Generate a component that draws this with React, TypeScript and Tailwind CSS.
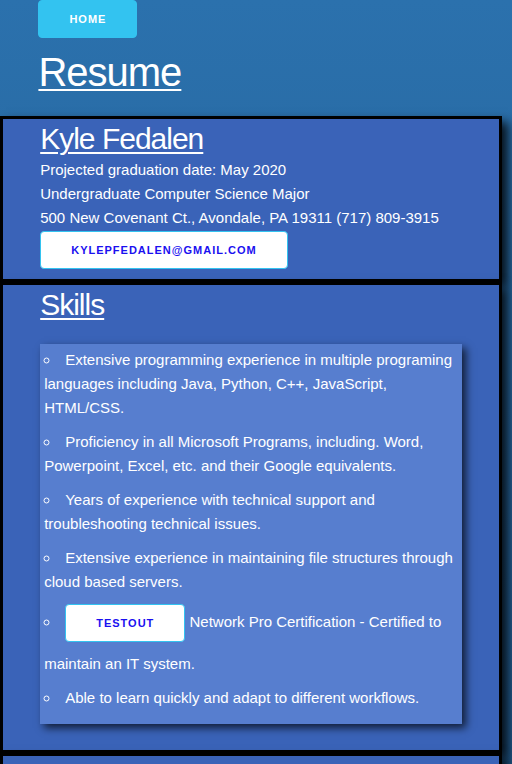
import React from "react";

const skills = [
  "Extensive programming experience in multiple programing languages including Java, Python, C++, JavaScript, HTML/CSS.",
  "Proficiency in all Microsoft Programs, including. Word, Powerpoint, Excel, etc. and their Google equivalents.",
  "Years of experience with technical support and troubleshooting technical issues.",
  "Extensive experience in maintaining file structures through cloud based servers.",
];

function Button({ children, primary }: { children: React.ReactNode; primary?: boolean }) {
  return (
    <a
      href="#"
      className={
        primary
          ? "inline-block h-[38px] rounded-[4px] border border-[#33c3f0] bg-[#33c3f0] px-[30px] text-center text-[11px] font-semibold uppercase leading-[36px] tracking-[1px] text-white no-underline"
          : "inline-block h-[38px] rounded-[4px] border border-[#33c3f0] bg-white px-[30px] text-center text-[11px] font-semibold uppercase leading-[36px] tracking-[1px] text-[#1a10f0] no-underline"
      }
    >
      {children}
    </a>
  );
}

export default function App() {
  return (
    <div className="min-h-screen bg-[linear-gradient(to_bottom,#2b71ad,#1f5586)] font-['Liberation_Sans',Arial,sans-serif] text-[15px] leading-[1.6] text-white">
      <header className="mx-auto w-[85%]">
        <div className="mb-[10px] flex">
          <Button primary>Home</Button>
        </div>
        <h1 className="mb-5 text-[40px] leading-[1.2] tracking-[-1px] underline decoration-2 underline-offset-[3px]">
          Resume
        </h1>
      </header>

      <section className="relative w-[98%] border-[3px] border-black bg-[#3a63b8] shadow-[6px_6px_10px_rgba(0,0,0,0.85)]">
        <div className="mx-auto w-[85%]">
          <h3 className="text-[30px] leading-[1.3] tracking-[-1px] underline decoration-2 underline-offset-[3px]">
            Kyle Fedalen
          </h3>
          <p>Projected graduation date: May 2020</p>
          <p>Undergraduate Computer Science Major</p>
          <p>500 New Covenant Ct., Avondale, PA 19311 (717) 809-3915</p>
          <div className="mb-[10px] mt-px flex">
            <Button>kylepfedalen@gmail.com</Button>
          </div>
        </div>
      </section>

      <section className="relative w-[98%] border-[3px] border-black bg-[#3a63b8] shadow-[6px_6px_10px_rgba(0,0,0,0.85)]">
        <div className="mx-auto w-[85%]">
          <h3 className="mb-5 text-[30px] leading-[1.3] tracking-[-1px] underline decoration-2 underline-offset-[3px]">
            Skills
          </h3>
          <ul className="mb-[26px] list-inside list-[circle] bg-[#577ecf] px-[4px] py-[4px] shadow-[4px_4px_8px_rgba(0,0,0,0.7)]">
            {skills.map((s) => (
              <li key={s} className="mb-[10px]">
                {s}
              </li>
            ))}
            <li className="mb-[10px]">
              <span className="mb-[10px] inline-block">
                <Button>Testout</Button>
              </span>{" "}
              Network Pro Certification - Certified to maintain an IT system.
            </li>
            <li className="mb-[10px]">Able to learn quickly and adapt to different workflows.</li>
          </ul>
        </div>
      </section>

      <section className="relative w-[98%] border-[3px] border-black bg-[#3a63b8] shadow-[6px_6px_10px_rgba(0,0,0,0.85)]">
        <div className="mx-auto w-[85%]">
          <h3 className="mb-5 text-[30px] leading-[1.3] tracking-[-1px] underline decoration-2 underline-offset-[3px]">
            Experience
          </h3>
          <div className="h-[120px]" />
        </div>
      </section>
    </div>
  );
}
